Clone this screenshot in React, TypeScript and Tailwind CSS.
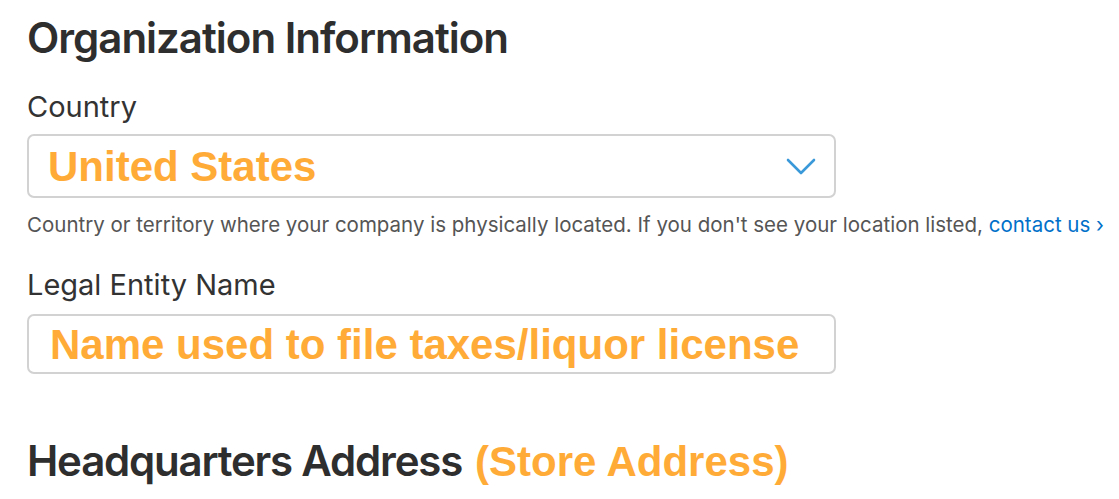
const orange = 'font-["Liberation_Sans","Arial",sans-serif] font-bold text-[#ffab38]';

const ChevronDown = () => (
  <svg width="30" height="17" viewBox="0 0 30 17" fill="none">
    <path d="M2 2 L15 15 L28 2" stroke="#3a9ad9" strokeWidth="2.6" strokeLinecap="round" strokeLinejoin="round" />
  </svg>
);

const App = () => {
  return (
    <div className='min-h-[499px] bg-white pl-[27px] pt-[13px] font-["Inter",sans-serif] text-[#2e2e2e]'>
      <h1 className="text-[42px] font-semibold leading-[50px] tracking-[-1px]">Organization Information</h1>

      <div className="mt-[27px] text-[29px] leading-[34px] text-[#333]">Country</div>
      <div className="mt-[10px] flex h-[64px] w-[809px] items-center justify-between rounded-[7px] border-2 border-[#d2d2d2] pl-[19px] pr-[18px]">
        <span className={`${orange} pt-[2px] text-[42px] leading-none`}>United States</span>
        <ChevronDown />
      </div>
      <p className="mt-[14px] text-[20.5px] leading-[26px] text-[#555]">
        Country or territory where your company is physically located. If you don't see your location listed,{' '}
        <span className="text-[#0070c9]">contact us ›</span>
      </p>

      <div className="mt-[30px] text-[29px] leading-[34px] text-[#333]">Legal Entity Name</div>
      <div className="mt-[12px] flex h-[60px] w-[809px] items-center rounded-[7px] border-2 border-[#d2d2d2] pl-[21px]">
        <span className={`${orange} pt-[2px] text-[42px] leading-none`}>Name used to file taxes/liquor license</span>
      </div>

      <h2 className="mt-[62px] flex items-baseline gap-[13px] text-[42px] font-semibold leading-[50px] tracking-[-1.2px]">
        <span>Headquarters Address</span>
        <span className={`${orange} tracking-normal`}>(Store Address)</span>
      </h2>
    </div>
  );
};

export default App;
